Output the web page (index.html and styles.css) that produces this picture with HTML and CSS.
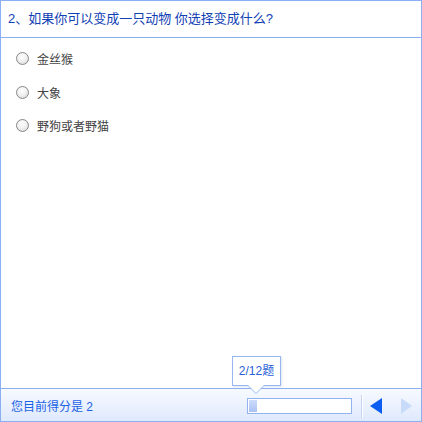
FILE: index.html
```html
<!DOCTYPE html>
<html lang="zh-CN">
<head>
<meta charset="utf-8">
<title>问卷</title>
<link rel="stylesheet" href="styles.css">
</head>
<body>
<div class="panel">
  <div class="header">2、如果你可以变成一只动物 你选择变成什么?</div>
  <ul class="options">
    <li class="option"><span class="radio"></span><span class="label">金丝猴</span></li>
    <li class="option"><span class="radio"></span><span class="label">大象</span></li>
    <li class="option"><span class="radio"></span><span class="label">野狗或者野猫</span></li>
  </ul>
  <div class="footer">
    <div class="score">您目前得分是 2</div>
    <div class="progress-wrap">
      <div class="tooltip">2/12题</div>
      <div class="progress"><div class="progress-fill" style="width: 8px"></div></div>
    </div>
    <div class="sep"></div>
    <div class="nav">
      <span class="arrow arrow-prev"></span>
      <span class="arrow arrow-next"></span>
    </div>
  </div>
</div>
</body>
</html>
```
FILE: styles.css
```css
html, body {
  margin: 0;
  padding: 0;
  background: #ffffff;
}
body {
  font-family: "Liberation Sans", Arial, "Noto Sans CJK SC", sans-serif;
}
.panel {
  width: 422px;
  height: 422px;
  box-sizing: border-box;
  border: 1px solid #8caef3;
  display: flex;
  flex-direction: column;
  background: #ffffff;
}
.header {
  height: 36px;
  line-height: 36px;
  border-bottom: 1px solid #8caef3;
  padding-left: 7px;
  font-size: 13px;
  color: #0f40b4;
  white-space: nowrap;
}
.options {
  list-style: none;
  margin: 0;
  padding: 4px 0 0 15px;
  flex: 1;
}
.option {
  height: 33.5px;
  display: flex;
  align-items: center;
}
.radio {
  width: 13px;
  height: 13px;
  box-sizing: border-box;
  border-radius: 50%;
  border: 1px solid #888888;
  background: radial-gradient(circle at 45% 35%, #ffffff 0%, #f1f1f1 45%, #d2d2d2 100%);
  margin-right: 8px;
  flex: none;
}
.label {
  font-size: 12px;
  color: #444444;
}
.footer {
  height: 33px;
  box-sizing: border-box;
  border-top: 1px solid #8caef3;
  background: linear-gradient(to bottom, #f7faff 0%, #dfe9fd 100%);
  display: flex;
  align-items: center;
  padding-left: 10px;
}
.score {
  font-size: 12px;
  color: #1a62e6;
  flex: 1;
}
.progress-wrap {
  position: relative;
  width: 105px;
  height: 16px;
  margin-top: 1px;
}
.progress {
  width: 105px;
  height: 16px;
  box-sizing: border-box;
  border: 1px solid #93b3f0;
  background: #ffffff;
  padding: 1px;
}
.progress-fill {
  height: 100%;
  background: linear-gradient(to bottom, #cddcfb 0%, #a9c1f4 100%);
}
.tooltip {
  position: absolute;
  left: -15px;
  top: -42px;
  width: 49px;
  height: 30px;
  box-sizing: border-box;
  border: 1px solid #98b6f0;
  background: #ffffff;
  box-shadow: 1px 1px 2px rgba(120, 150, 210, 0.25);
  font-size: 12px;
  color: #2a5fd8;
  text-align: center;
  line-height: 28px;
}
.tooltip::before,
.tooltip::after {
  content: "";
  position: absolute;
  width: 0;
  height: 0;
  border-style: solid;
  border-color: transparent;
}
.tooltip::before {
  left: 14px;
  top: 28px;
  border-width: 9px 9px 0 9px;
  border-top-color: #98b6f0;
}
.tooltip::after {
  left: 15px;
  top: 28px;
  border-width: 8px 8px 0 8px;
  border-top-color: #ffffff;
}
.sep {
  width: 1px;
  height: 23px;
  background: #c8d7ef;
  border-right: 1px solid #ffffff;
  margin: 2px 0 0 9px;
}
.nav {
  display: flex;
  align-items: center;
  width: 58px;
  padding-left: 7px;
  box-sizing: border-box;
  margin-top: 1px;
}
.arrow {
  width: 0;
  height: 0;
  border-style: solid;
  border-color: transparent;
}
.arrow-prev {
  border-width: 8px 12px 8px 0;
  border-right-color: #0a5cf2;
}
.arrow-next {
  margin-left: 19px;
  border-width: 8px 0 8px 11px;
  border-left-color: #c8dbf8;
}
```
